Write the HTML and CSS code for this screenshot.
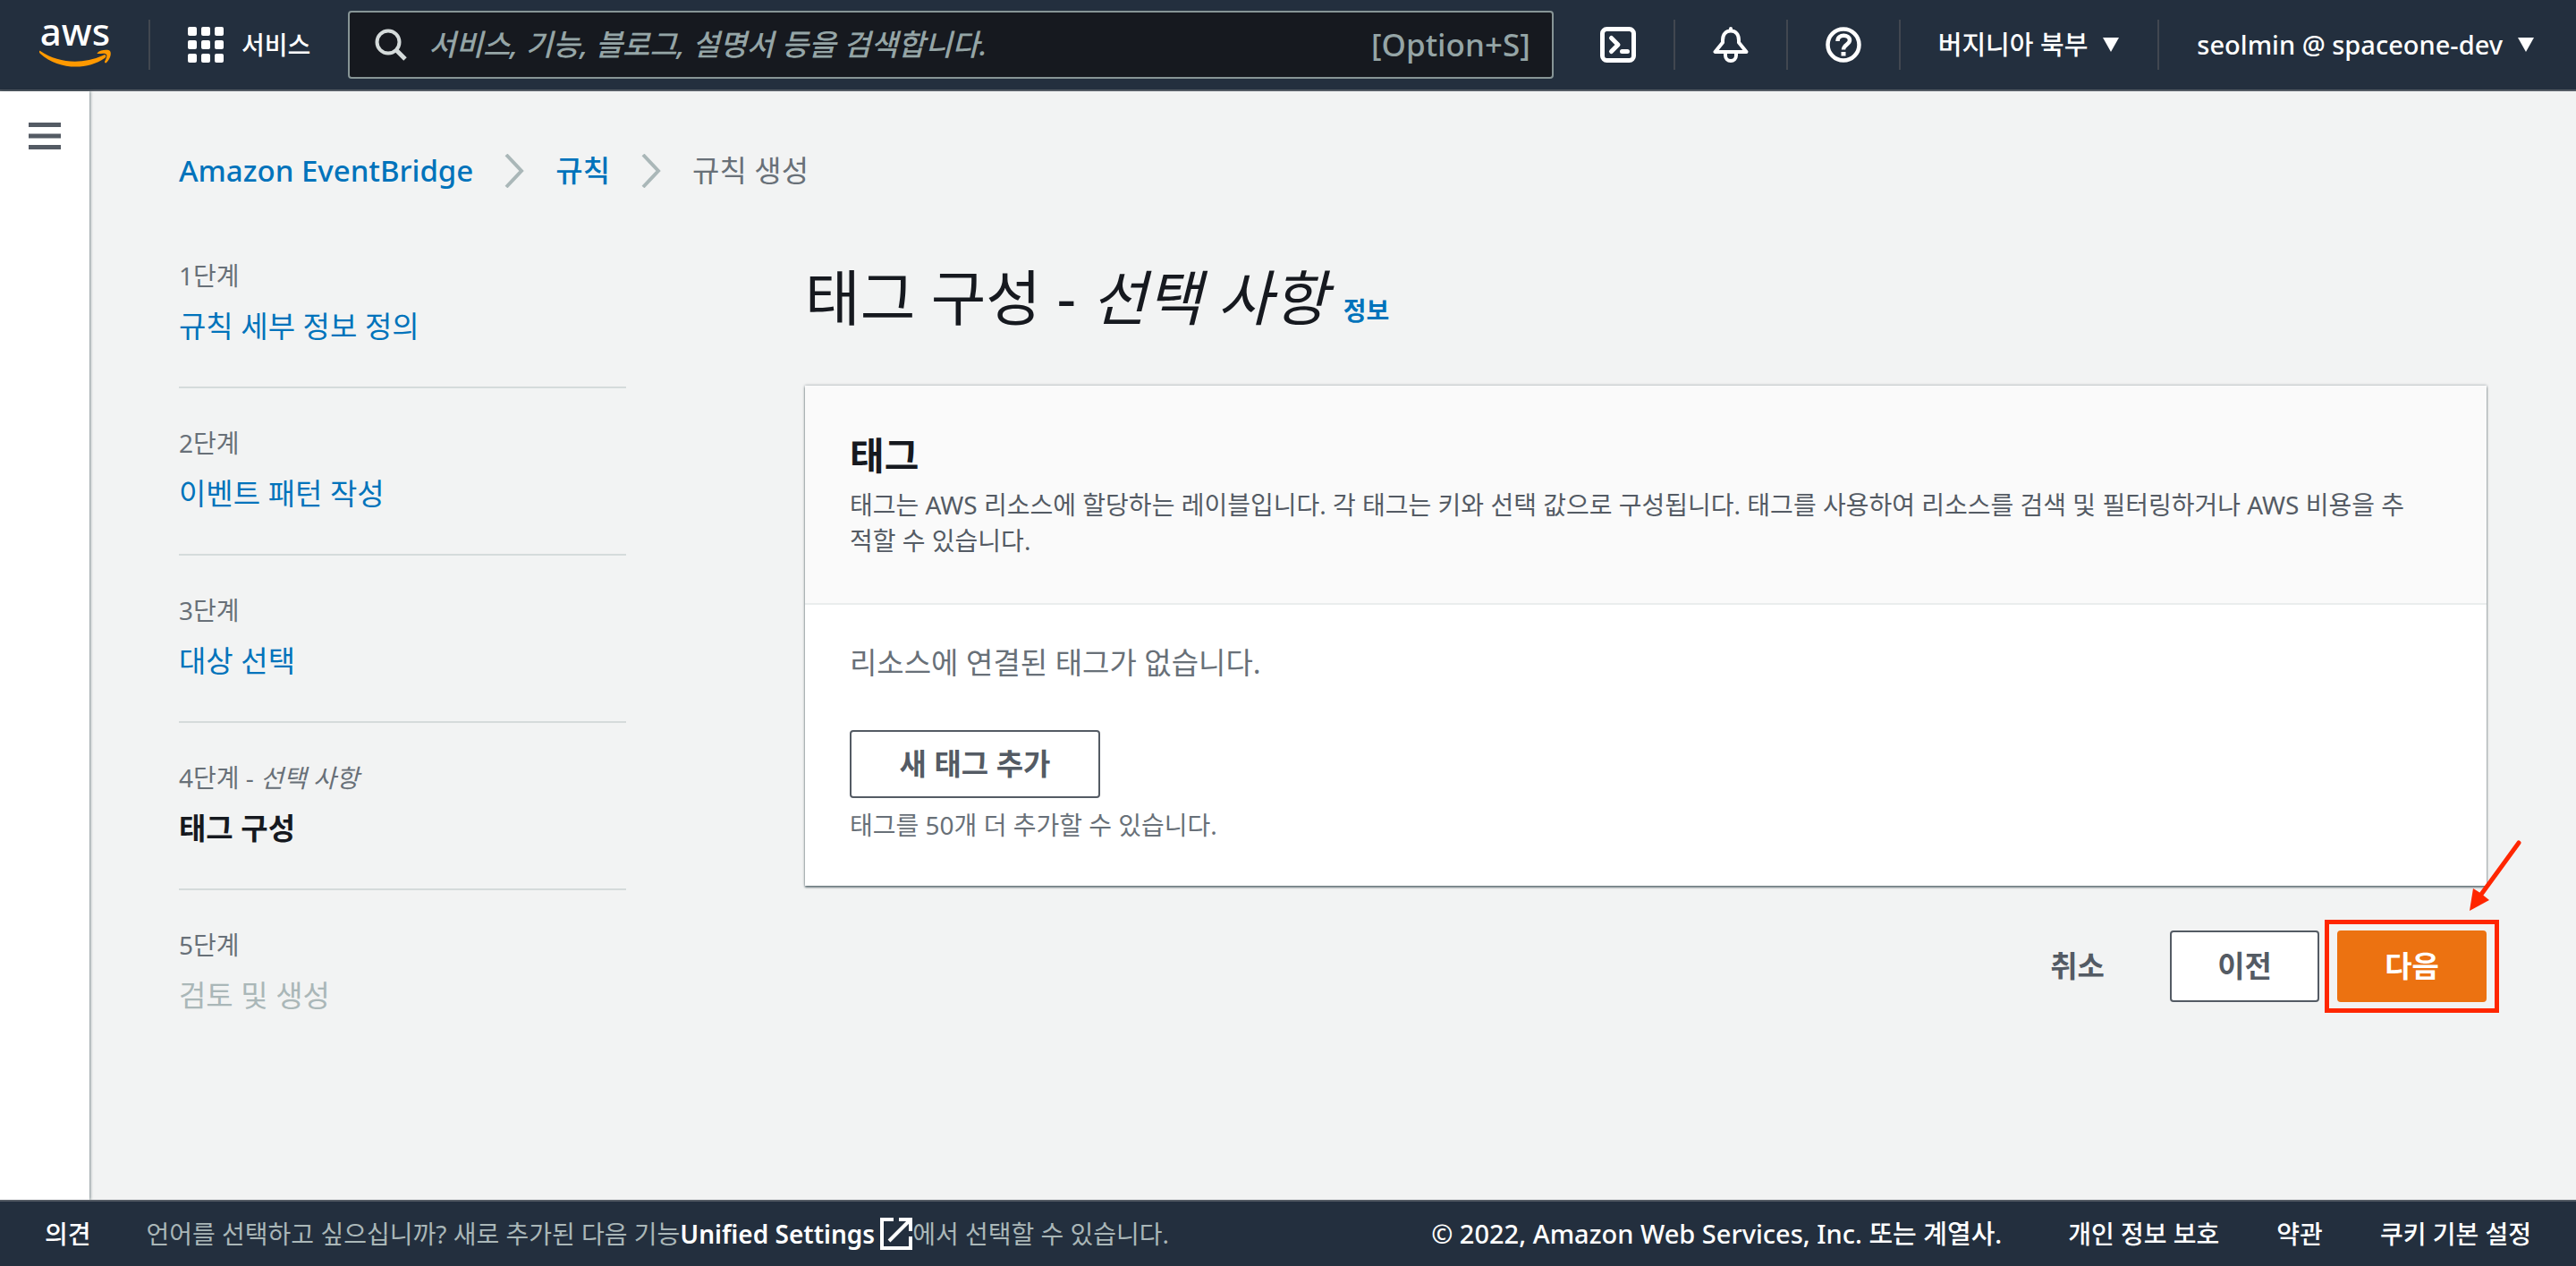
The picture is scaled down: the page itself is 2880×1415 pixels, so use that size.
FILE: index.html
```html
<!DOCTYPE html>
<html lang="ko">
<head>
<meta charset="utf-8">
<meta name="viewport" content="width=device-width, initial-scale=1">
<title>Amazon EventBridge</title>
<link rel="stylesheet" href="styles.css">
</head>
<body>
<header class="topbar">
  <a class="logo" href="#" aria-label="AWS">
    <svg width="82" height="96" viewBox="0 -20 82 96">
      <text class="logo-text" x="40" y="29" text-anchor="middle">aws</text>
      <path d="M1 35 C22 49 48 50 71 40 C74 38 76 41 73 43 C53 57 21 56 1 38 C-1 36 0 34 1 35Z" fill="#ff9900"/>
      <path d="M65 37 C68 33 78 33 79 35 C81 38 79 44 75 48 C74 49 73 48 73 47 C75 43 76 40 75 39 C74 37 69 38 66 38 C65 38 64 38 65 37Z" fill="#ff9900"/>
    </svg>
  </a>
  <button class="services" type="button">
    <svg width="40" height="40" viewBox="0 0 40 40" fill="#fff"><rect width="10" height="10" rx="2"/><rect x="15" width="10" height="10" rx="2"/><rect x="30" width="10" height="10" rx="2"/><rect y="15" width="10" height="10" rx="2"/><rect x="15" y="15" width="10" height="10" rx="2"/><rect x="30" y="15" width="10" height="10" rx="2"/><rect y="30" width="10" height="10" rx="2"/><rect x="15" y="30" width="10" height="10" rx="2"/><rect x="30" y="30" width="10" height="10" rx="2"/></svg>
    <span>서비스</span>
  </button>
  <label class="search">
    <svg width="36" height="36" viewBox="0 0 36 36" fill="none" stroke="#d5dbdb" stroke-width="4"><circle cx="15" cy="15" r="12.5"/><path d="M24 24l10 10" stroke-width="5"/></svg>
    <input class="search-input" type="text" aria-label="검색" placeholder="서비스, 기능, 블로그, 설명서 등을 검색합니다.">
    <span class="shortcut">[Option+S]</span>
  </label>
  <nav class="tools">
    <button class="tool" type="button" aria-label="CloudShell">
      <svg width="40" height="40" viewBox="0 0 40 40" fill="none" stroke="#fff" stroke-width="5" stroke-linecap="round" stroke-linejoin="round"><rect x="2.500" y="2.500" width="35" height="35" rx="5"/><path d="M12.500 12.500l7.500 7.500-7.500 7.500M24.500 27.500h6"/></svg>
    </button>
    <button class="tool" type="button" aria-label="알림">
      <svg width="40" height="40" viewBox="0 0 40 40" fill="none" stroke="#fff" stroke-width="4" stroke-linecap="round" stroke-linejoin="round"><path d="M20 2v2"/><path d="M2.500 28h35L29 17.500V15c0-7-4-10.500-9-10.500S11 8 11 15v2.500Z"/><path d="M14 29v3a6 6 0 0 0 12 0v-3"/></svg>
    </button>
    <button class="tool" type="button" aria-label="도움말">
      <svg width="40" height="40" viewBox="0 0 40 40" fill="none" stroke="#fff" stroke-width="4.500"><circle cx="20" cy="20" r="17.500"/><path d="M13.500 16c0-8.500 13.500-8 13.500-1 0 4.500-7 5-7 10.500"/><path d="M20 28v4.500" stroke-width="5"/></svg>
    </button>
    <button class="tool menu" type="button"><span>버지니아 북부</span><svg width="20" height="16" viewBox="0 0 20 16"><path d="M1 0h18l-9 16z" fill="#fff"/></svg></button>
    <button class="tool menu" type="button"><span>seolmin @ spaceone-dev</span><svg width="20" height="16" viewBox="0 0 20 16"><path d="M1 0h18l-9 16z" fill="#fff"/></svg></button>
  </nav>
</header>

<div class="shell">
  <aside class="rail">
    <button class="burger" type="button" aria-label="메뉴"><svg width="36" height="30" viewBox="0 0 36 30" fill="#545b64"><path d="M0 0h36v5H0zM0 12.500h36v5H0zM0 25h36v5H0z"/></svg></button>
  </aside>
  <main class="page">
    <nav class="crumbs" aria-label="경로">
      <a href="#">Amazon EventBridge</a>
      <svg width="24" height="38" viewBox="0 0 24 38" fill="none" stroke="#aab7b8" stroke-width="4"><path d="M3 1l17 18L3 37"/></svg>
      <a href="#">규칙</a>
      <svg width="24" height="38" viewBox="0 0 24 38" fill="none" stroke="#aab7b8" stroke-width="4"><path d="M3 1l17 18L3 37"/></svg>
      <span class="current">규칙 생성</span>
    </nav>
    <div class="wizard">
      <ol class="steps">
        <li class="step"><span class="step-label">1단계</span><a class="step-name" href="#">규칙 세부 정보 정의</a></li>
        <li class="step"><span class="step-label">2단계</span><a class="step-name" href="#">이벤트 패턴 작성</a></li>
        <li class="step"><span class="step-label">3단계</span><a class="step-name" href="#">대상 선택</a></li>
        <li class="step"><span class="step-label">4단계 - <i>선택 사항</i></span><strong class="step-name">태그 구성</strong></li>
        <li class="step"><span class="step-label">5단계</span><span class="step-name disabled">검토 및 생성</span></li>
      </ol>
      <section class="content">
        <h1 class="title">태그 구성 - <i>선택 사항</i> <a class="info" href="#">정보</a></h1>
        <div class="card">
          <div class="card-head">
            <h2>태그</h2>
            <p>태그는 AWS 리소스에 할당하는 레이블입니다. 각 태그는 키와 선택 값으로 구성됩니다. 태그를 사용하여 리소스를 검색 및 필터링하거나 AWS 비용을 추적할 수 있습니다.</p>
          </div>
          <div class="card-body">
            <p class="empty">리소스에 연결된 태그가 없습니다.</p>
            <button class="btn add" type="button">새 태그 추가</button>
            <p class="hint">태그를 50개 더 추가할 수 있습니다.</p>
          </div>
        </div>
        <div class="actions">
          <button class="btn plain" type="button">취소</button>
          <button class="btn" type="button">이전</button>
          <div class="next">
            <button class="btn primary" type="button">다음</button>
            <span class="highlight"></span>
            <svg class="arrow" width="64" height="84" viewBox="0 0 64 84"><path d="M60 4L17 63" stroke="#ff2600" stroke-width="5" stroke-linecap="round"/><path d="M5 80L9 55l8 5 10 8z" fill="#ff2600"/></svg>
          </div>
        </div>
      </section>
    </div>
  </main>
</div>

<footer class="footer">
  <a href="#">의견</a>
  <p class="notice">언어를 선택하고 싶으십니까? 새로 추가된 다음 기능<a href="#">Unified Settings<svg width="36" height="36" viewBox="0 0 36 36" fill="none" stroke="#fff" stroke-width="4"><path d="M15 2H2v32h32V21"/><path d="M10 26L32 4M21 2h13v13"/></svg></a>에서 선택할 수 있습니다.</p>
  <span class="copyright">© 2022, Amazon Web Services, Inc. 또는 계열사.</span>
  <nav class="legal"><a href="#">개인 정보 보호</a><a href="#">약관</a><a href="#">쿠키 기본 설정</a></nav>
</footer>
</body>
</html>
```
FILE: styles.css
```css
* { box-sizing: border-box; }

body {
  margin: 0;
  min-height: 100vh;
  display: flex;
  flex-direction: column;
  background: #f2f3f3;
  color: #16191f;
  font-family: "Noto Sans", "Noto Sans CJK KR", sans-serif;
  font-size: 33px;
  line-height: 50px;
}

h1, h2, p, ol { margin: 0; padding: 0; }
a { color: #0073bb; text-decoration: none; }
button { font: inherit; color: inherit; background: none; border: 0; padding: 0; cursor: pointer; }
svg { display: block; flex: none; }

/* Top bar */
.topbar {
  display: flex;
  align-items: center;
  height: 102px;
  padding: 0 46px 0 44px;
  background: #232f3e;
  border-bottom: 2px solid #545b64;
  color: #fff;
  font-size: 28px;
  font-weight: 500;
  line-height: 40px;
}
.logo { padding-right: 40px; }
.logo-text { font-size: 42px; font-weight: 500; fill: #fff; }
.services {
  display: flex;
  align-items: center;
  gap: 20px;
  height: 56px;
  padding: 0 42px;
  border-left: 2px solid #414750;
  white-space: nowrap;
}
.search {
  flex: 1;
  display: flex;
  align-items: center;
  height: 76px;
  padding: 0 24px 0 28px;
  background: #16191f;
  border: 2px solid #879596;
  border-radius: 4px;
  color: #95a5a6;
  font-size: 33px;
}
.search-input {
  flex: 1;
  min-width: 0;
  padding: 0 0 0 24px;
  background: none;
  border: 0;
  outline: 0;
  color: #fff;
  font: inherit;
}
.search-input::placeholder { color: #95a5a6; font-style: italic; opacity: 1; }
.shortcut { font-size: 35px; }
.tools { display: flex; padding-left: 10px; }
.tool {
  display: flex;
  align-items: center;
  gap: 16px;
  height: 56px;
  padding: 0 42px;
  border-left: 2px solid #414750;
  white-space: nowrap;
}
.tool:first-child { border-left: 0; }
.menu { font-size: 29px; }
.tool:last-child { padding-right: 0; }

/* Side rail and page */
.shell { flex: 1; display: flex; }
.rail {
  width: 100px;
  padding: 28px 32px;
  background: #fff;
  box-shadow: 1px 0 3px rgba(0, 28, 36, .5);
}
.page { flex: 1; min-width: 0; padding: 64px 100px 80px; }
.crumbs { display: flex; align-items: center; gap: 34px; color: #687078; font-weight: 500; }
.current { font-weight: 400; }

/* Wizard */
.wizard { display: flex; gap: 200px; padding-top: 72px; }
.steps { flex: none; width: 500px; list-style: none; }
.step {
  display: flex;
  flex-direction: column;
  gap: 12px;
  padding-bottom: 42px;
}
.step + .step { padding-top: 41px; border-top: 2px solid #d5dbdb; }
.step-label { color: #687078; font-size: 28px; line-height: 40px; }
.disabled { color: #aab7b8; }

.content { flex: 1; min-width: 0; }
.title { font-size: 67px; font-weight: 400; line-height: 88px; }
.info { font-size: 28px; font-weight: 700; }
.card {
  margin-top: 40px;
  background: #fff;
  box-shadow: 0 2px 2px rgba(0, 28, 36, .5), 0 0 3px rgba(0, 28, 36, .4);
}
.card-head {
  padding: 48px 76px 50px 50px;
  background: #fafafa;
  border-bottom: 2px solid #eaeded;
  color: #545b64;
  font-size: 28px;
  line-height: 40px;
}
.card-head h2 { margin-bottom: 5px; color: #16191f; font-size: 42px; line-height: 60px; }
.card-body { padding: 40px 50px 48px; color: #687078; }
.hint { margin-top: 10px; font-size: 28px; line-height: 40px; }

.btn {
  min-width: 167px;
  height: 80px;
  padding: 0 50px;
  background: #fff;
  border: 2px solid #545b64;
  border-radius: 4px;
  color: #545b64;
  font-weight: 700;
  white-space: nowrap;
}
.add { min-width: 280px; height: 76px; margin-top: 50px; }
.plain { background: none; border-color: transparent; }
.primary { background: #ec7211; border-color: #ec7211; color: #fff; }

.actions { display: flex; justify-content: flex-end; gap: 20px; margin-top: 50px; }
.next { position: relative; }
.highlight {
  position: absolute;
  inset: -12px -14px;
  border: 5px solid #ff2600;
  pointer-events: none;
}
.arrow { position: absolute; right: -40px; top: -102px; }

/* Footer */
.footer {
  display: flex;
  align-items: center;
  height: 74px;
  padding: 0 50px;
  background: #232f3e;
  border-top: 2px solid #545b64;
  color: #fff;
  font-size: 28px;
  font-weight: 500;
  line-height: 40px;
  white-space: nowrap;
}
.footer a { color: #fff; }
.notice { display: flex; flex: 1; padding-left: 62px; color: #aab7b8; font-weight: 400; }
.notice a { display: flex; align-items: center; gap: 6px; font-weight: 600; }
.copyright { font-size: 29px; }
.legal { display: flex; gap: 64px; padding-left: 74px; }
```
